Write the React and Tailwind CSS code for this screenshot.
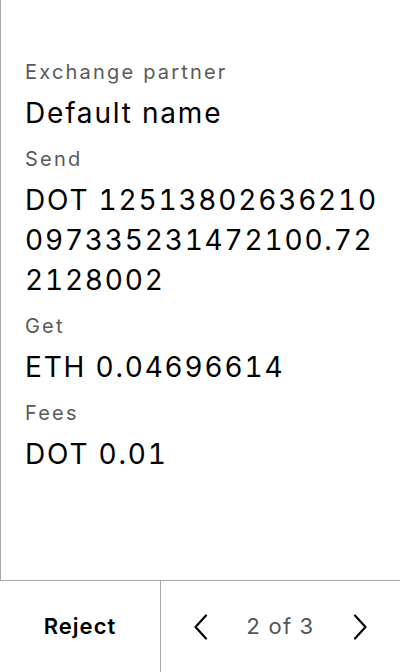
import React from 'react';

function Chevron({ dir }) {
  return (
    <svg width="16" height="26" viewBox="0 0 16 26" fill="none" stroke="#000" strokeWidth="2.2" strokeLinecap="round" strokeLinejoin="round">
      {dir === 'left' ? <polyline points="13,1.5 2.5,13 13,24.5" /> : <polyline points="3,1.5 13.5,13 3,24.5" />}
    </svg>
  );
}

const rows = [
  { label: 'Exchange partner', value: 'Default name' },
  { label: 'Send', value: 'DOT 12513802636210097335231472100.722128002' },
  { label: 'Get', value: 'ETH 0.04696614' },
  { label: 'Fees', value: 'DOT 0.01' },
];

export default function App() {
  return (
    <div className="h-[672px] w-[400px] flex flex-col bg-white" style={{ fontFamily: 'Inter, "Noto Sans", sans-serif' }}>
      {/* Details */}
      <div className="flex-1 border-l border-[#a8a8a8] pl-6 pr-4 pt-[58px]">
        {rows.map((row, i) => (
          <div key={row.label} className={i > 0 ? 'mt-3' : ''}>
            <div className="text-[20px] leading-[28px] tracking-[2.2px] text-[#5a5a5a]">{row.label}</div>
            <div className="mt-[7px] text-[28px] leading-[40px] tracking-[1.8px] tabular-nums text-black break-all">{row.value}</div>
          </div>
        ))}
      </div>

      {/* Footer actions */}
      <div className="h-[92px] flex border-t border-[#a8a8a8]">
        <button className="w-[160px] flex items-center justify-center text-[22px] tracking-[1px] font-semibold text-black">
          Reject
        </button>
        <div className="flex-1 flex items-center justify-between border-l border-[#a8a8a8] pl-[32px] pr-[32px]">
          <Chevron dir="left" />
          <span className="text-[22px] tracking-[1.2px] tabular-nums text-[#555]">2 of 3</span>
          <Chevron dir="right" />
        </div>
      </div>
    </div>
  );
}
